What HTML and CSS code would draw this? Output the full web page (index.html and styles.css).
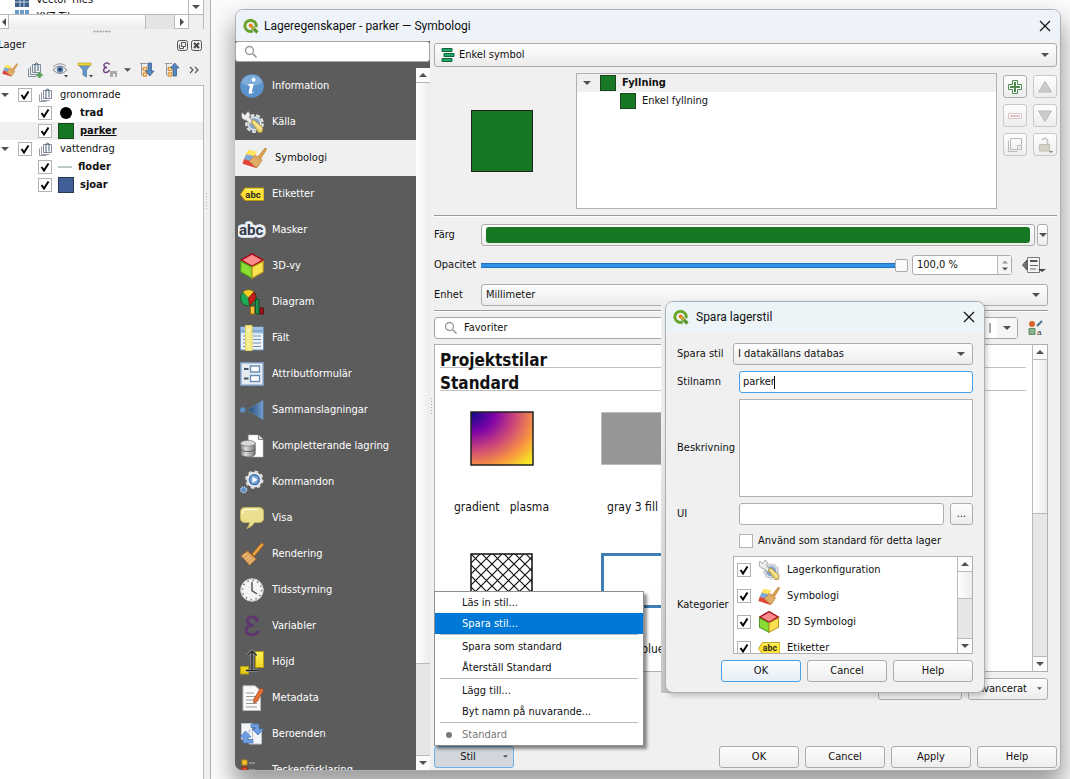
FILE: index.html
```html
<!DOCTYPE html>
<html lang="sv">
<head>
<meta charset="utf-8">
<title>Lageregenskaper - parker — Symbologi</title>
<link rel="stylesheet" href="styles.css">
</head>
<body>
<svg class="defs" aria-hidden="true">
  <defs>
    <linearGradient id="g-join"><stop offset="0" stop-color="#1f3f68"/><stop offset="1" stop-color="#6f9fd4"/></linearGradient>
    <linearGradient id="g-cyl"><stop offset="0" stop-color="#777"/><stop offset=".35" stop-color="#ddd"/><stop offset="1" stop-color="#777"/></linearGradient>
    <linearGradient id="g-yel" x2="0" y2="1"><stop offset="0" stop-color="#fff35a"/><stop offset="1" stop-color="#e6c80a"/></linearGradient>
    <radialGradient id="g-plasma" cx="0" cy="0" r="1.3"><stop offset="0" stop-color="#0d0887"/><stop offset=".3" stop-color="#8104a7"/><stop offset=".55" stop-color="#cc4778"/><stop offset=".8" stop-color="#f89441"/><stop offset="1" stop-color="#f7e225"/></radialGradient>
    <pattern id="p-hatch" width="11" height="11" patternUnits="userSpaceOnUse"><path d="M0 0 11 11M11 0 0 11" stroke="#111" stroke-width="1.2"/></pattern>
    <symbol id="i-qgis" viewBox="0 0 16 16"><path d="M7.500 2.200A5.600 5.600 0 1 0 9.800 12.900M7.500 2.200A5.600 5.600 0 0 1 13 9.200" fill="none" stroke="#6aa52c" stroke-width="3"/><path d="M8.500 8.500 14.500 14.500" stroke="#589632" stroke-width="3.200"/><circle cx="7.700" cy="7.600" r="2" fill="#ee7913"/><path d="m8 8 3 3" stroke="#f0b040" stroke-width="1.600"/></symbol>
    <symbol id="i-search" viewBox="0 0 14 14"><circle cx="5.500" cy="5.500" r="4" fill="none" stroke="#999" stroke-width="1.300"/><path d="m8.500 8.500 4 4" stroke="#999" stroke-width="1.600"/></symbol>
    <symbol id="i-close" viewBox="0 0 12 12"><path d="m1 1 10 10M11 1 1 11" stroke="#111" stroke-width="1.200"/></symbol>
    <symbol id="i-info" viewBox="0 0 24 24"><circle cx="12" cy="12" r="11.800" fill="#5b93cf"/><path d="M1 9A11.500 11.500 0 0 1 22.500 8C18 12 8 14 1 9Z" fill="#7fadd9"/><circle cx="13.600" cy="5.700" r="2" fill="#fff"/><path d="M8.600 10h5.200l-2 7.500c0 1.200 1.400.5 2.600-.2-1.500 2.700-6.300 3.800-5.700.4l1.200-5.700-1.900-.4z" fill="#fff"/></symbol>
    <symbol id="i-source" viewBox="0 0 24 24"><circle cx="14.500" cy="13.500" r="7.600" fill="#7ba0cc" stroke="#e4e4e4" stroke-width="3.600" stroke-dasharray="3.600 1.700"/><circle cx="14.500" cy="13.500" r="6.300" fill="#83a6d0" stroke="#eee" stroke-width="1.500"/><circle cx="14.500" cy="13.500" r="7" fill="none" stroke="#8d9299" stroke-width=".5"/><path d="M2 2.500 5 5 8 1.200A5 5 0 0 1 9.500 7.500l4 4.500-2.500 2.500-4.800-4.300C3 10.500.2 7.500 2 2.500Z" fill="#eee" stroke="#777" stroke-width=".7"/><path d="m11 12 3-2.500 9 8.500-.8 4.300-3.700.2z" fill="#ead276" stroke="#9a802b" stroke-width=".8"/><path d="m13.500 11.500 7.500 7.500" stroke="#fff0a8" stroke-width="1.200"/></symbol>
    <symbol id="i-symb" viewBox="0 0 26 24"><path d="m7 3.500 9 2-5 6-8-2.500z" fill="#ffe45c"/><path d="m4.500 8 8 2-3 6-7.500-3z" fill="#7fa8da"/><path d="m2 13 8 2.500 7 3.500-2 3.500L.5 18z" fill="#e0443a"/><path d="m17 10.500 7-9 1.700 1.200-6.200 9.800z" fill="#e0a24c" stroke="#b0762e" stroke-width=".7"/><path d="m13.500 8.500 7.500 5.500-4.500 7-2.500.5-6.500-6z" fill="#dba65e" stroke="#b37b38" stroke-width=".6"/><path d="m13 12-3.500 4.500m6-3L12 18.500m5.500-3.500-3.500 5" stroke="#efc78a" stroke-width=".8"/></symbol>
    <symbol id="i-label" viewBox="0 0 24 24"><path d="M5 6h19v12.500H5l-4.500-6z" fill="#ffe236" stroke="#b89b13"/><path d="M6 7.500h16" stroke="#fff59a"/><text x="5.300" y="15.600" font-family="Roboto" font-weight="bold" font-size="9.500" fill="#2c2c20">abc</text></symbol>
    <symbol id="i-mask" viewBox="0 0 26 24"><text x="1" y="16.500" font-family="Roboto" font-weight="bold" font-size="14" fill="#333b48" stroke="#e8edf7" stroke-width="5" stroke-linejoin="round" paint-order="stroke">abc</text></symbol>
    <symbol id="i-cube" viewBox="0 0 24 26"><path d="M12 .8 23 7 12 13.500 1 7z" fill="#fa8b8b" stroke="#a50d1d" stroke-width="1.600"/><path d="m.8 8.200 11.200 6v11L.8 19z" fill="#8bdc35" stroke="#4c9a1a" stroke-width="1.200"/><path d="m23.200 8.200-11.200 6v11L23.200 19z" fill="#fbe34f" stroke="#b8961d" stroke-width="1.200"/></symbol>
    <symbol id="i-diag" viewBox="0 0 24 25"><circle cx="8.500" cy="8.500" r="8" fill="#1fa855" stroke="#175c35"/><path d="M8.500 8.500 3 2.500Q8.500-2 14 2.500z" fill="#f6ce25" stroke="#9c7d10" stroke-width=".7"/><path d="M8.500 8.500 14 2.500Q19.500 9 9.500 16z" fill="#c51b1b" stroke="#621010" stroke-width=".7"/><path d="M10.500 17h4v7.500h-4z" fill="#f8c43b" stroke="#a06b10"/><path d="M15.500 10h3.500v14.500h-3.500z" fill="#1c9150" stroke="#0e532c"/><path d="M20 18.500h3.500v6H20z" fill="#a51818" stroke="#5c0d0d"/></symbol>
    <symbol id="i-field" viewBox="0 0 24 26"><path d="M.5 2h23v23H.5z" fill="#eef2f7" stroke="#6d8fb8"/><path d="M1 2.500h22v6H1z" fill="#9fc3e8"/><path d="M1 6h22M13 11h8M13 14.500h8M13 18h8M13 21.500h8M3 11h3M3 14.500h3M3 18h3M3 21.500h3" stroke="#6d8fb8"/><path d="M5.500.5h6.500v25H5.500z" fill="#f5ee8e" stroke="#e0d35c"/><circle cx="8.700" cy="5" r="1.300" fill="#fffbd0"/></symbol>
    <symbol id="i-form" viewBox="0 0 24 24"><path d="M.8.800h22.400v22.400H.8z" fill="#e7ecf2" stroke="#7898bf" stroke-width="1.400"/><path d="M10.500 4h9v6h-9zM10.500 13.500h9v6h-9z" fill="#fff" stroke="#6b90bb" stroke-width="1.400"/><path d="M4 7h4.500M4 16.500h4.500" stroke="#42546b" stroke-width="2"/></symbol>
    <symbol id="i-join" viewBox="0 0 26 24"><circle cx="3" cy="12" r="2.900" fill="#5d91c6"/><path d="M25 1.500v21L8 12z" fill="url(#g-join)" stroke="#6994c2" stroke-width=".5"/></symbol>
    <symbol id="i-store" viewBox="0 0 26 26"><path d="M9 1h11l5 5v19H9z" fill="#fff" stroke="#aaa" stroke-width=".6"/><path d="M20 1v5h5" fill="#ddd" stroke="#777"/><path d="M.5 10v11.500c0 4.500 16 4.500 16 0V10z" fill="url(#g-cyl)" stroke="#555" stroke-width=".7"/><ellipse cx="8.500" cy="10" rx="8" ry="3.200" fill="#d6d6d6" stroke="#666" stroke-width=".7"/><path d="M.5 16c0 4 16 4 16 0" fill="none" stroke="#555"/></symbol>
    <symbol id="i-action" viewBox="0 0 26 26"><circle cx="15.500" cy="10.500" r="8.500" fill="#ddd" stroke="#ddd" stroke-width="3" stroke-dasharray="3.600 3.100"/><circle cx="15.500" cy="10.500" r="6.800" fill="#5688c0" stroke="#fff"/><circle cx="15.500" cy="10.500" r="5.200" fill="#76a4d6" stroke="#41689a"/><path d="m13.500 7 5.500 3.500-5.500 3.500z" fill="#fff"/><circle cx="4" cy="21.500" r="3.200" fill="#5f93c8" stroke="#adc7e3" stroke-width="1.600" stroke-dasharray="1.500 1"/></symbol>
    <symbol id="i-tip" viewBox="0 0 24 24"><path d="M5 1.500h14q4.500 0 4.500 4.500v6q0 4.500-4.500 4.500h-4.500Q13 20 7 22.500q2.500-3 2.500-6H5Q.5 16.500.5 12V6Q.5 1.500 5 1.500z" fill="#eadf8e" stroke="#c5b75c"/><path d="M2.500 8Q2 3.500 6 3.500h12" fill="none" stroke="#fffbd6" stroke-width="1.500"/></symbol>
    <symbol id="i-brush" viewBox="0 0 24 24"><path d="m12 12 9.500-11q2 .3 1.800 2.200L14.500 14z" fill="#efa545" stroke="#a8681f"/><path d="m7.500 9 9 8-7 6.500L1 13.500z" fill="#dba05a" stroke="#985f24" stroke-width=".8"/><path d="m7 11-4.500 4.500M9.500 13 5 17.500M11.500 15 7 19.500M13.500 17 9 21.500" stroke="#f6cd92"/></symbol>
    <symbol id="i-clock" viewBox="0 0 24 24"><circle cx="12" cy="12" r="11.300" fill="#f4f4f2" stroke="#c9c9c9"/><circle cx="12" cy="12" r="9.600" fill="none" stroke="#6a7d98" stroke-width="1.600" stroke-dasharray="1.500 3.520"/><path d="M12 4v8.500l5 3.500" fill="none" stroke="#555" stroke-width="1.500"/></symbol>
    <symbol id="i-eps" viewBox="0 0 24 24"><path d="M17.500 6.500C16 1.500 7.500 2 7.500 6.500 7.500 10 10 11.200 13.500 11.200 8.500 11.200 6 13 6 16.200 6 22 16.500 22 18.500 17" fill="none" stroke="#5f3670" stroke-width="3"/><circle cx="16.800" cy="6.200" r="2" fill="#5f3670"/></symbol>
    <symbol id="i-elev" viewBox="0 0 24 25"><path d="M15.500 2h8v16h-8zM.5 17h8v7.500h-8z" fill="url(#g-yel)" stroke="#b49d10"/><path d="M12 3.500V20M6 21h12M7.500 6 12 1.500 16.500 6" fill="none" stroke="#bbb" stroke-width="2.600"/><path d="M12 3v17M6 21h12M7.500 6 12 1.500 16.500 6" fill="none" stroke="#222" stroke-width="1.500"/></symbol>
    <symbol id="i-meta" viewBox="0 0 24 26"><path d="M3 .8h12l5.500 5v19.700H3z" fill="#fafafa" stroke="#bbb"/><path d="M6 8h8M6 11.500h10M6 15h9M6 18.500h11M6 22h11" stroke="#999"/><path d="m20.500 3 3.300 2-6.500 11.500-3.600 1.500.2-4z" fill="#e07135" stroke="#a04820" stroke-width=".7"/></symbol>
    <symbol id="i-dep" viewBox="0 0 24 24"><path d="M1.500 1.500h11v16h-11zM9 8h12.500v14H9z" fill="#f3f5f9" stroke="#b9c2d0"/><path d="M11 2h8v5h4.500l-5.500 6-6-6h3V5.500h-4z" fill="#6e9ee0" stroke="#4773b5" stroke-width=".7"/><path d="M13 21H3v-6H0l5.500-6 5.500 6H8v2.500h5z" fill="#6e9ee0" stroke="#4773b5" stroke-width=".7"/></symbol>
    <symbol id="i-leg" viewBox="0 0 24 24"><path d="M2 2h5v5H2z" fill="#f8c62c" stroke="#b88a10"/><path d="M2 9h5v5H2z" fill="#e0492a" stroke="#98260f"/><path d="M9 5h6M9 12h6" stroke="#999" stroke-width="1.500"/></symbol>
    <symbol id="i-group" viewBox="0 0 14 14"><path d="M4.500 2.500h8v8h-8z" fill="#fff" stroke="#889"/><path d="M2.500 4.500v8h8M.5 6.500v7h7" fill="none" stroke="#99a"/><path d="M7 11V2q1.500-2 3 0v7.500" fill="none" stroke="#47627c"/></symbol>
    <symbol id="i-win" viewBox="0 0 11 11"><rect x=".5" y=".5" width="10" height="10" rx="2" fill="none" stroke="#555"/><path d="M4.500 2.500h4v4h-4zM2.500 4.500v4h4v-2" fill="none" stroke="#555"/></symbol>
    <symbol id="i-x" viewBox="0 0 11 11"><rect x=".5" y=".5" width="10" height="10" rx="2" fill="none" stroke="#555"/><path d="m3 3 5 5M8 3 3 8" stroke="#444" stroke-width="2"/></symbol>
    <symbol id="i-down" viewBox="0 0 8 4"><path d="M0 0h8L4 4z" fill="#505050"/></symbol>
    <symbol id="i-up" viewBox="0 0 8 4"><path d="M0 4h8L4 0z" fill="#505050"/></symbol>
  </defs>
</svg>

<main class="desktop">
  <aside class="dock">
    <div class="browser">
      <div class="browser-list">
        <div class="browser-row"><svg class="ic14" viewBox="0 0 14 14"><path d="M0 0h14v14H0z" fill="#3d5f88"/><path d="M0 5h14M0 9h14M5 0v14M9 0v14" stroke="#c6d6e6"/></svg>Vector Tiles</div>
        <div class="browser-row"><svg class="ic14" viewBox="0 0 14 14"><path d="M0 0h4v4H0zM5 0h4v4H5zM10 0h4v4h-4zM0 5h4v4H0zM5 5h4v4H5zM10 5h4v4h-4z" fill="#6a9bcb"/></svg>XYZ Tiles</div>
      </div>
      <div class="browser-side"><svg class="tri"><use href="#i-down"/></svg></div>
      <div class="hbar"><span class="hstart"><svg class="tri left"><use href="#i-down"/></svg></span><span class="hthumb"></span><span class="hgap"></span><span class="hend"><svg class="tri right"><use href="#i-down"/></svg></span></div>
      <div class="corner"></div>
    </div>
    <div class="grip-h"></div>
    <header class="dock-title"><h2>Lager</h2><button aria-label="Lösgör"><svg><use href="#i-win"/></svg></button><button aria-label="Stäng panel"><svg><use href="#i-x"/></svg></button></header>
    <div class="toolbar">
      <button aria-label="Stil"><svg class="ic16"><use href="#i-symb"/></svg></button>
      <button aria-label="Lägg till grupp"><svg class="ic16" viewBox="0 0 16 16"><path d="M5.500 2.500h8v8h-8zM3.500 4.500v8h8M1.500 6.500v8h8" fill="none" stroke="#7f8c99"/><path d="M8 10V2q1.500-2 3 0v7" fill="none" stroke="#47627c"/><path d="M12.500 10v6M9.500 13h6" stroke="#57a05c" stroke-width="2.500"/></svg></button>
      <button aria-label="Synlighet"><svg class="ic16" viewBox="0 0 16 16"><path d="M1 8q7-8 14 0-7 7-14 0z" fill="#eee" stroke="#888"/><circle cx="8" cy="7.500" r="3.200" fill="#5784b5"/><circle cx="8" cy="7.500" r="1.300" fill="#223"/><path d="M1 5q6-6 13-1" fill="none" stroke="#999"/><path d="M12 13h4l-2 2.500z" fill="#444"/></svg></button>
      <button aria-label="Filter"><svg class="ic16" viewBox="0 0 16 16"><path d="M1 2h13L9.500 8v7L6 13V8z" fill="#6797c8" stroke="#436d9c" stroke-width=".7"/><path d="M1 1h13v2.500H1z" fill="#eedb40" stroke="#ab9a20" stroke-width=".6"/><path d="M12 13h4l-2 2.500z" fill="#444"/></svg></button>
      <button aria-label="Uttrycksfilter"><svg class="ic16" viewBox="0 0 16 16"><path d="M7.500 2.500C6 0 1.500 1 2 3.500q.5 2 3 2C1 5.500.500 10 3.500 10.500q3 0 4-2.500" fill="none" stroke="#71457f" stroke-width="1.500"/><path d="M8 9h7v6h-2v-3h-2v3H8z" fill="#aaa"/></svg></button>
      <svg class="tri"><use href="#i-down"/></svg>
      <button aria-label="Expandera alla"><svg class="ic16" viewBox="0 0 16 16"><path d="M1 1.500h7M2.500 2v11h3M2.500 7h3" fill="none" stroke="#999"/><path d="M4.500 5.500h3v3h-3zM4.500 11h3v3h-3z" fill="#fff" stroke="#e59a3a" stroke-width="1.300"/><path d="M9 1h3.500v8H15l-4.200 5L6.500 9H9z" fill="#5586be" stroke="#31598a" stroke-width=".7"/></svg></button>
      <button aria-label="Minimera alla"><svg class="ic16" viewBox="0 0 16 16"><path d="M1 1.500h7M2.500 2v11h3M2.500 7h3" fill="none" stroke="#999"/><path d="M4.500 5.500h3v3h-3zM4.500 11h3v3h-3z" fill="#fff" stroke="#e59a3a" stroke-width="1.300"/><path d="M9 14h3.500V6H15l-4.200-5L6.500 6H9z" fill="#5586be" stroke="#31598a" stroke-width=".7"/></svg></button>
      <button class="more" aria-label="Mer"><svg viewBox="0 0 10 8"><path d="m1 1 3 3-3 3M6 1l3 3-3 3" fill="none" stroke="#555" stroke-width="1.200"/></svg></button>
    </div>
    <ul class="layers">
      <li><svg class="tri"><use href="#i-down"/></svg><label><input type="checkbox" checked><svg class="ic14"><use href="#i-group"/></svg>gronomrade</label></li>
      <li class="child"><label><input type="checkbox" checked><span class="dot"></span><b>trad</b></label></li>
      <li class="child on"><label><input type="checkbox" checked><span class="swatch"></span><b><u>parker</u></b></label></li>
      <li><svg class="tri"><use href="#i-down"/></svg><label><input type="checkbox" checked><svg class="ic14"><use href="#i-group"/></svg>vattendrag</label></li>
      <li class="child"><label><input type="checkbox" checked><span class="line"></span><b>floder</b></label></li>
      <li class="child"><label><input type="checkbox" checked><span class="swatch blue"></span><b>sjoar</b></label></li>
    </ul>
  </aside>
  <div class="grip-v"></div>

  <section class="window props" aria-label="Lageregenskaper">
    <header class="titlebar"><svg class="ic16"><use href="#i-qgis"/></svg><h1>Lageregenskaper - parker — Symbologi</h1><button aria-label="Stäng"><svg class="ic12"><use href="#i-close"/></svg></button></header>
    <div class="body">
      <div class="side">
        <label class="find"><svg class="ic14"><use href="#i-search"/></svg><input type="search" aria-label="Sök"></label>
        <div class="nav-wrap">
          <nav class="nav">
            <button><svg><use href="#i-info"/></svg>Information</button>
            <button><svg><use href="#i-source"/></svg>Källa</button>
            <button class="on"><svg><use href="#i-symb"/></svg>Symbologi</button>
            <button><svg><use href="#i-label"/></svg>Etiketter</button>
            <button><svg class="wide"><use href="#i-mask"/></svg>Masker</button>
            <button><svg><use href="#i-cube"/></svg>3D-vy</button>
            <button><svg><use href="#i-diag"/></svg>Diagram</button>
            <button><svg><use href="#i-field"/></svg>Fält</button>
            <button><svg><use href="#i-form"/></svg>Attributformulär</button>
            <button><svg><use href="#i-join"/></svg>Sammanslagningar</button>
            <button><svg><use href="#i-store"/></svg>Kompletterande lagring</button>
            <button><svg><use href="#i-action"/></svg>Kommandon</button>
            <button><svg><use href="#i-tip"/></svg>Visa</button>
            <button><svg><use href="#i-brush"/></svg>Rendering</button>
            <button><svg><use href="#i-clock"/></svg>Tidsstyrning</button>
            <button><svg><use href="#i-eps"/></svg>Variabler</button>
            <button><svg><use href="#i-elev"/></svg>Höjd</button>
            <button><svg><use href="#i-meta"/></svg>Metadata</button>
            <button><svg><use href="#i-dep"/></svg>Beroenden</button>
            <button><svg><use href="#i-leg"/></svg>Teckenförklaring</button>
          </nav>
          <div class="vbar side-bar"><span class="vend"><svg class="tri"><use href="#i-up"/></svg></span><span class="vthumb"></span><span class="vgap"></span><span class="vend"><svg class="tri"><use href="#i-down"/></svg></span></div>
        </div>
      </div>
      <div class="grip-v"></div>
      <div class="content">
        <div class="combo-icon">
          <svg class="ic14" viewBox="0 0 14 14"><path d="M1 .5h10v3H1zM3 5.500h10v3H3zM1 10.500h10v3H1z" fill="#25a567" stroke="#12663d"/></svg>
          <select class="tall" aria-label="Symboltyp"><option>Enkel symbol</option></select>
        </div>
        <div class="symbol">
          <div class="preview"><span></span></div>
          <ul class="tree">
            <li class="on"><svg class="tri"><use href="#i-down"/></svg><span class="swatch"></span><b>Fyllning</b></li>
            <li class="sub"><span class="swatch"></span>Enkel fyllning</li>
          </ul>
          <div class="tools">
            <button aria-label="Lägg till"><svg viewBox="0 0 16 16"><path d="M5.500 1.500h5v4h4v5h-4v4h-5v-4h-4v-5h4z" fill="#fff" stroke="#4f8a52"/><path d="M8 3v10M3 8h10" stroke="#4f8a52" stroke-width="2"/></svg></button>
            <button disabled aria-label="Upp"><svg viewBox="0 0 16 16"><path d="m8 2.500 6.500 10.500h-13z" fill="#ccc" stroke="#b5b9bd"/></svg></button>
            <button disabled aria-label="Ta bort"><svg viewBox="0 0 16 16"><path d="M1.500 5.500h13v5h-13z" fill="#fff" stroke="#d9c3c6"/><path d="M3 8h10" stroke="#dfc3c6" stroke-width="2"/></svg></button>
            <button disabled aria-label="Ned"><svg viewBox="0 0 16 16"><path d="M8 13.500 14.500 3h-13z" fill="#ccc" stroke="#b5b9bd"/></svg></button>
            <button disabled aria-label="Duplicera"><svg viewBox="0 0 16 16"><path d="M3.500 1.500h11v11h-11zM1.500 3.500v11h9" fill="none" stroke="#bbb"/><path d="M10.500 8.500h4v4h-4z" fill="#eee" stroke="#bbb"/></svg></button>
            <button disabled aria-label="Lås"><svg viewBox="0 0 16 16"><path d="M2.500 7.500h10v6.500h-10z" fill="#d3d2c4" stroke="#c0bfb4"/><path d="M5 3q4-4 5.500 1v3" fill="none" stroke="#c4c4c4" stroke-width="1.600"/><path d="M12 14h4l-2 2z" fill="#777"/></svg></button>
          </div>
        </div>
        <hr>
        <div class="form">
          <span class="lab">Färg</span>
          <div class="row color"><button class="fill" aria-label="Färg"><span></span></button><button class="drop" aria-label="Färgmeny"><svg class="tri"><use href="#i-down"/></svg></button></div>
          <label for="opac">Opacitet</label>
          <div class="row opacity"><input id="opac" type="range" value="100">
            <div class="spin"><input type="text" value="100,0 %" aria-label="Opacitet i procent"><span><svg class="tri dim"><use href="#i-up"/></svg><svg class="tri"><use href="#i-down"/></svg></span></div>
            <button class="flat" aria-label="Datadefinierad"><svg viewBox="0 0 24 18"><path d="M5.500 1.500h12v15h-12z" fill="#f5f5f5" stroke="#777"/><path d="M5 4v10L.5 9z" fill="#777" stroke="#555"/><path d="M8 5h7.500" stroke="#555" stroke-width="2"/><path d="M8 9.500h8M8 13h6" stroke="#666"/><path d="M16 13h8l-4 3z" fill="#444"/></svg></button></div>
          <label for="unit">Enhet</label>
          <select id="unit"><option>Millimeter</option></select>
        </div>
        <div class="styles">
          <hr>
          <div class="filter">
            <label class="find wide"><svg class="ic14"><use href="#i-search"/></svg><input type="text" value="Favoriter" aria-label="Filtrera symboler"><span class="clear"></span><span class="drop-part"><svg class="tri"><use href="#i-down"/></svg></span></label>
            <button class="flat" aria-label="Stilhanterare"><svg class="ic16" viewBox="0 0 16 16"><circle cx="4" cy="4" r="3" fill="#d9652c"/><path d="M1 8.500h6v6H1z" fill="#88b38b" stroke="#5f8f66"/><path d="m9 6 5-5" stroke="#4a6d92" stroke-width="2"/><text x="9" y="14.500" font-family="Liberation Sans" font-size="8" fill="#333">a</text></svg></button>
          </div>
          <div class="gallery">
            <div class="gallery-main">
              <h3>Projektstilar</h3>
              <h3>Standard</h3>
              <div class="thumbs">
                <figure><svg viewBox="0 0 64 56"><path d="M1 1h62v53H1z" fill="url(#g-plasma)" stroke="#222" stroke-width="1.500"/></svg><figcaption>gradient &nbsp; plasma</figcaption></figure>
                <figure><svg viewBox="0 0 64 56"><path d="M.5 1.500h63v52H.5z" fill="#969696" stroke="#bbb"/></svg><figcaption>gray 3 fill</figcaption></figure>
                <figure><svg viewBox="0 0 64 56"><path d="M1 1h61v53H1z" fill="url(#p-hatch)" stroke="#111" stroke-width="1.500"/></svg></figure>
                <figure><svg viewBox="0 0 64 56"><path d="M1.500 1.500h61v52h-61z" fill="#fff" stroke="#3f7db5" stroke-width="3"/></svg><figcaption>outline blue</figcaption></figure>
              </div>
            </div>
            <div class="vbar gal-bar"><span class="vend"><svg class="tri"><use href="#i-up"/></svg></span><span class="vthumb"></span><span class="vgap"></span><span class="vend"><svg class="tri"><use href="#i-down"/></svg></span></div>
          </div>
          <div class="after"><button class="btn" aria-label="Spara symbol"></button><button class="btn menu-btn">Avancerat<svg class="tri small"><use href="#i-down"/></svg></button></div>
        </div>
        <footer class="actions">
          <div class="stil">
            <button class="btn menu-btn pressed">Stil<svg class="tri small"><use href="#i-down"/></svg></button>
            <div class="menu" role="menu">
              <button role="menuitem">Läs in stil...</button>
              <button role="menuitem" class="on">Spara stil...</button>
              <hr>
              <button role="menuitem">Spara som standard</button>
              <button role="menuitem">Återställ Standard</button>
              <hr>
              <button role="menuitem">Lägg till...</button>
              <button role="menuitem">Byt namn på nuvarande...</button>
              <hr>
              <button role="menuitem" disabled><span class="bullet"></span>Standard</button>
            </div>
          </div>
          <button class="btn">OK</button><button class="btn">Cancel</button><button class="btn">Apply</button><button class="btn">Help</button>
        </footer>
      </div>
    </div>
  </section>

  <div class="save-holder">
    <section class="window save" aria-label="Spara lagerstil">
      <header class="titlebar"><svg class="ic16"><use href="#i-qgis"/></svg><h1>Spara lagerstil</h1><button aria-label="Stäng"><svg class="ic12"><use href="#i-close"/></svg></button></header>
      <form class="save-form">
        <label for="where">Spara stil</label><select id="where"><option>I datakällans databas</option></select>
        <label for="name">Stilnamn</label><div class="field in focus"><input id="name" type="text" value="parker" size="4"><i class="caret"></i></div>
        <label for="desc">Beskrivning</label><textarea id="desc" class="in"></textarea>
        <label for="ui">UI</label><div class="row in"><input id="ui" class="field" type="text"><button type="button" class="btn dots">...</button></div>
        <label class="default in"><input type="checkbox">Använd som standard för detta lager</label>
        <span class="lab">Kategorier</span>
        <div class="cats">
          <ul>
            <li><label><input type="checkbox" checked><svg><use href="#i-source"/></svg>Lagerkonfiguration</label></li>
            <li><label><input type="checkbox" checked><svg><use href="#i-symb"/></svg>Symbologi</label></li>
            <li><label><input type="checkbox" checked><svg><use href="#i-cube"/></svg>3D Symbologi</label></li>
            <li><label><input type="checkbox" checked><svg><use href="#i-label"/></svg>Etiketter</label></li>
          </ul>
          <div class="vbar cat-bar"><span class="vend"><svg class="tri"><use href="#i-up"/></svg></span><span class="vthumb"></span><span class="vgap"></span><span class="vend"><svg class="tri"><use href="#i-down"/></svg></span></div>
        </div>
        <footer class="save-actions"><button type="button" class="btn default-btn">OK</button><button type="button" class="btn">Cancel</button><button type="button" class="btn">Help</button></footer>
      </form>
    </section>
  </div>
</main>
</body>
</html>
```
FILE: styles.css
```css
* { box-sizing: border-box; }
body { margin: 0; background: #fbfbfb; color: #111; font: 11px/18px "DejaVu Sans Condensed", "Noto Sans", sans-serif; }
button, input, select, textarea { font: inherit; color: inherit; margin: 0; }
button { padding: 0; border: 0; background: none; display: flex; align-items: center; }
ul { margin: 0; padding: 0; list-style: none; }
h1, h2, h3, figure { margin: 0; font-weight: normal; }
svg { flex: none; display: block; }
.defs { position: absolute; width: 0; height: 0; }
.tri { width: 8px; height: 4px; }
.tri.small { width: 5px; height: 3px; }
.tri.dim { opacity: .55; }
.tri.right { transform: rotate(-90deg); }
.tri.left { transform: rotate(90deg); }
.ic12 { width: 12px; height: 12px; }
.ic14 { width: 14px; height: 14px; }
.ic16 { width: 16px; height: 16px; }
.desktop { position: relative; display: flex; height: 100vh; overflow: hidden; }

/* layer dock */
.dock { width: 204px; background: #f0f0f0; display: flex; flex-direction: column; overflow: hidden; }
.desktop > .grip-v { width: 7px; background-color: #f0f0f0; border-right: 1px solid #b4b4b4; background-position: 2px 193px; }
.browser { height: 29px; display: grid; grid-template: 14px 15px / 1fr 15px; border: solid #b9b9b9; border-width: 0 1px 1px 0; background: #fff; }
.browser-list { overflow: hidden; display: flex; flex-direction: column; justify-content: flex-start; margin-top: -9px; padding-left: 15px; }
.browser-row { display: flex; gap: 7px; align-items: center; height: 17px; flex: none; }
.browser-side { border-left: 1px solid #b9b9b9; display: grid; place-items: center; }
.hbar { display: flex; border-top: 1px solid #b9b9b9; }
.hstart { width: 8px; display: grid; place-items: center start; overflow: hidden; }
.hthumb { flex: 1; border: solid #b9b9b9; border-width: 0 1px; background: linear-gradient(#fff, #ececec); }
.hgap { width: 28px; background: #e4e4e4; }
.hend { width: 14px; border-left: 1px solid #b9b9b9; display: grid; place-items: center; }
.corner { border: solid #b9b9b9; border-width: 1px 0 0 1px; background: #f0f0f0; }
.grip-h { width: 18px; height: 7px; align-self: center; background: radial-gradient(circle, #aaa 40%, transparent 60%) 0 1px / 3px 3px repeat-x; }
.grip-v { width: 4px; background: radial-gradient(circle, #aaa 40%, transparent 60%) 0 357px / 3px 18px no-repeat; background-image: repeating-linear-gradient(#aaa 0 1px, transparent 1px 3px); background-size: 1px 18px; background-position: 1px 357px; }
.dock-title { display: flex; align-items: center; gap: 3px; height: 18px; padding-right: 2px; }
.dock-title h2 { flex: 1; font-size: 11px; margin-left: -2px; }
.dock-title svg { width: 11px; height: 11px; }
.toolbar { display: flex; align-items: center; gap: 9px; height: 31px; padding-left: 2px; }
.toolbar .tri { margin: 0 -1px 0 -3px; width: 7px; }
.toolbar .more svg { width: 10px; height: 8px; }
.layers { flex: 1; background: #fff; border: solid #b9b9b9; border-width: 1px 1px 0 0; }
.layers li { height: 18px; display: flex; align-items: center; padding-left: 1px; gap: 9px; }
.layers label { display: flex; align-items: center; gap: 7px; }
.layers .child { padding-left: 38px; }
.layers .child label { gap: 6px; }
.layers .on, .tree .on { background: #efefef; }
.swatch { width: 16px; height: 16px; background: #177823; border: 1px solid #1b4521; }
.swatch.blue { background: #3f5f96; border-color: #27384f; }
.dot { width: 12px; height: 12px; margin: 0 2px; border-radius: 50%; background: #000; }
.line { width: 14px; height: 2px; background: #bccabf; }
.layers .swatch, .layers .dot { flex: none; }
input[type=checkbox] { appearance: none; width: 14px; height: 14px; flex: none; border: 1px solid #b3b3b3; background: #fff; }
input[type=checkbox]:checked { background: #fff url("data:image/svg+xml,%3Csvg xmlns='http://www.w3.org/2000/svg' viewBox='0 0 12 12'%3E%3Cpath d='M2.500 6 5 9.500 9.500 2.500' fill='none' stroke='%23000' stroke-width='2'/%3E%3C/svg%3E") center / 12px 12px no-repeat; }

/* windows */
.window { display: flex; flex-direction: column; background: #f0f0f0; border: 1px solid #aab0b4; border-radius: 8px; }
.props { position: absolute; inset: 9px 9px 8px 235px; box-shadow: 0 14px 24px 2px rgba(0, 0, 0, .38); }
.titlebar { display: flex; align-items: center; gap: 5px; height: 31px; padding: 0 9px 0 7px; background: #eef3fa; border-radius: 7px 7px 0 0; }
.titlebar h1 { flex: 1; font: 12px/18px Roboto, "Open Sans", sans-serif; }
.body { flex: 1; display: flex; min-height: 0; }
.side { width: 195px; margin-left: -1px; display: flex; flex-direction: column; background: #5c5c5c; border-radius: 0 0 0 7px; overflow: hidden; }
.find { display: flex; align-items: center; gap: 6px; height: 21px; margin-bottom: 6px; padding: 0 8px; background: #fff; border: 1px solid #a5a5a5; border-radius: 3px; }
.find input { border: 0; outline: 0; padding: 0; background: none; flex: 1; min-width: 0; }
.nav-wrap { flex: 1; display: flex; min-height: 0; }
.nav { flex: 1; overflow: hidden; }
.nav button { width: 100%; height: 36px; padding-left: 5px; gap: 8px; color: #fff; text-align: left; }
.nav svg { width: 24px; height: 26px; }
.nav .wide { width: 28px; margin: 0 -2px; }
.nav .on { background: #f0f0f0; color: #111; padding-left: 7px; }
.nav .on svg { width: 25px; }
.vbar { width: 15px; display: flex; flex-direction: column; border-left: 1px solid #b9b9b9; background: #e6e6e6; }
.vend { height: 14px; display: grid; place-items: center; background: #fbfbfb; }
.vthumb { border: solid #b9b9b9; border-width: 1px 0; background: linear-gradient(90deg, #fff, #ececec); }
.vgap { border-bottom: 1px solid #b9b9b9; flex: 1; }
.side-bar .vthumb { flex: 19; }
.side-bar .vgap { flex: 3; }
.gal-bar .vthumb { flex: 15; }
.gal-bar .vgap { flex: 14; }
.side-bar { width: 14px; border: 0; }
.content { flex: 1; min-width: 0; display: flex; flex-direction: column; padding: 2px 3px 2px 0; }
select { appearance: none; height: 22px; width: 100%; padding: 0 4px; border: 1px solid #acacac; border-radius: 3px; outline: 0; background: url("data:image/svg+xml,%3Csvg xmlns='http://www.w3.org/2000/svg' viewBox='0 0 8 4'%3E%3Cpath d='M0 0h8L4 4z' fill='%23505050'/%3E%3C/svg%3E") right 7px center / 8px 4px no-repeat, linear-gradient(#fefefe, #ececec); }
.combo-icon { display: grid; align-items: center; margin-bottom: 6px; }
.combo-icon > * { grid-area: 1 / 1; }
.combo-icon svg { z-index: 1; margin-left: 7px; }
.combo-icon select { height: 24px; padding-left: 24px; }
.symbol { display: flex; gap: 6px; height: 136px; margin-bottom: 6px; }
.preview { width: 136px; display: grid; place-items: center; }
.preview span { width: 62px; height: 62px; background: #177823; border: 1px solid #222; }
.tree { flex: 1; background: #fff; border: 1px solid #b0b0b0; }
.tree li { display: flex; align-items: center; height: 18px; gap: 6px; padding-left: 6px; }
.tree .tri { margin-right: 3px; }
.tree .sub { padding-left: 43px; }
.tools { display: grid; grid-template: repeat(3, 23px) / repeat(2, 24px); gap: 6px; padding-top: 2px; }
.tools button, .color button, .btn { justify-content: center; border: 1px solid #acacac; border-radius: 3px; background: linear-gradient(#fefefe, #ededed); }
.tools button:disabled { border-color: #c9c9c9; }
.tools svg { width: 16px; height: 16px; }
hr { width: 100%; height: 2px; margin: 0; border: 0; border-top: 1px solid #999; background: #fff; flex: none; }
.form { display: grid; grid-template-columns: 41px 1fr; gap: 8px 6px; padding: 7px 9px 4px 0; align-items: center; }
.row { display: flex; gap: 6px; align-items: center; min-width: 0; }
.color { gap: 2px; }
.color button { height: 22px; }
.color .fill { flex: 1; padding: 2px 4px; }
.fill span { flex: 1; height: 16px; border-radius: 3px; background: #177823; }
.color .drop { width: 11px; }
.opacity { height: 22px; gap: 4px; }
input[type=range] { flex: 1; min-width: 0; appearance: none; height: 14px; background: none; }
input[type=range]::-webkit-slider-runnable-track { height: 5px; background: linear-gradient(#2d91e6, #2d91e6); border: solid #1f72bd; border-width: 1px 0; }
input[type=range]::-webkit-slider-thumb { appearance: none; width: 13px; height: 13px; margin-top: -5px; background: #fafafa; border: 1px solid #aaa; border-radius: 2px; }
.spin { width: 100px; height: 20px; display: flex; border: 1px solid #acacac; border-radius: 3px; background: #fff; }
.spin input { flex: 1; min-width: 0; border: 0; padding: 0 4px; background: none; }
.spin span { width: 14px; display: flex; flex-direction: column; justify-content: center; align-items: center; gap: 3px; border-left: 1px solid #b9b9b9; background: #f5f5f5; }
.spin .tri { width: 6px; }
.flat svg { width: 24px; height: 18px; }
.opacity .flat { margin: 0 2px 0 6px; }
.styles { flex: 1; min-height: 0; display: flex; flex-direction: column; gap: 5px; padding-right: 9px; }
.filter { display: flex; gap: 10px; }
.filter .find { flex: 1; height: 22px; margin: 0; gap: 6px; padding: 0 0 0 9px; }
.clear { width: 2px; height: 10px; background: #aaa; }
.drop-part { align-self: stretch; width: 20px; display: grid; place-items: center; background: #f6f6f6; }
.filter .flat svg { width: 16px; height: 16px; margin-right: 4px; }
.gallery { flex: 1; min-height: 0; display: flex; background: #fff; border: 1px solid #b0b0b0; overflow: hidden; }
.gallery-main { flex: 1; padding: 0 6px 0 5px; overflow: hidden; }
h3 { height: 23px; font: bold 17px/30px "DejaVu Sans Condensed", sans-serif; border-bottom: 1px solid #c0c0c0; }
.thumbs { display: grid; grid-template-columns: repeat(4, 131px); grid-auto-rows: 142px; margin: 20px 0 0 -4px; }
figure { display: flex; flex-direction: column; align-items: center; gap: 31px; font-size: 12px; }
figure svg { width: 64px; height: 56px; }
figure:nth-child(n+3) { grid-row: 2; }
.after { display: flex; justify-content: flex-end; gap: 6px; margin-top: 1px; }
.btn { width: 80px; height: 22px; flex: none; }
.after .btn:first-child { width: 84px; }
.menu-btn { position: relative; padding-right: 12px; }
.menu-btn .tri { position: absolute; right: 5px; top: 8px; }
.actions { display: flex; gap: 6px; margin-top: 46px; }
.stil { position: relative; margin-right: auto; }
.btn.pressed { background: #d1d7dc; border-color: #6fb0e6; }
.menu { position: absolute; left: 0; bottom: 100%; width: 210px; padding: 0; background: #fff; border: 1px solid #8f8f8f; box-shadow: 3px 3px 3px rgba(0, 0, 0, .45); }
.menu button { width: 100%; height: 21px; padding-left: 27px; position: relative; }
.menu .on { background: #0078d7; color: #fff; }
.menu button:disabled { color: #777; }
.menu hr { width: auto; margin: 0 5px; border-color: #bbb; }
.bullet { position: absolute; left: 11px; top: 8px; width: 6px; height: 6px; border-radius: 50%; background: #777; }

/* save style dialog */
.save-holder { position: absolute; left: 661px; top: 301px; width: 324px; padding-left: 4px; background: linear-gradient(#f0f0f0 30%, #c4c4c4) 0 0 / 12px 100% no-repeat; }
.save { box-shadow: 2px 3px 5px rgba(0, 0, 0, .2); }
.save .titlebar { height: 30px; gap: 7px; background: #edf4f8; }
.save-form { display: grid; grid-template-columns: 50px 1fr; gap: 6px; padding: 11px 11px 10px; align-items: center; white-space: nowrap; }
.save-form .in { margin-left: 6px; }
.field { height: 22px; min-width: 0; background: #fff; border: 1px solid #acacac; border-radius: 3px; }
.focus { display: flex; align-items: center; border-color: #4aa0e6; padding-left: 3px; }
.focus input { width: 31px; border: 0; padding: 0; outline: 0; background: none; }
.caret { width: 1px; height: 13px; background: #000; }
.save-form textarea { height: 98px; resize: none; border: 1px solid #b0b0b0; }
.save-form .row .field { flex: 1; }
.dots { width: 23px; height: 22px; }
.default { grid-column: 2; display: flex; align-items: center; gap: 5px; height: 19px; }
.cats { height: 98px; display: flex; border: 1px solid #b0b0b0; background: #fff; overflow: hidden; }
.cats ul { flex: 1; }
.cats label { display: flex; align-items: center; height: 26px; padding-left: 3px; gap: 7px; }
.cats li svg { width: 22px; height: 22px; }
.cat-bar .vthumb { height: 28px; }
.save-actions { grid-column: 1 / -1; display: flex; justify-content: flex-end; gap: 6px; }
.default-btn { border-color: #4aa0e6; background: linear-gradient(#fafdff, #e6eef5); }
```
